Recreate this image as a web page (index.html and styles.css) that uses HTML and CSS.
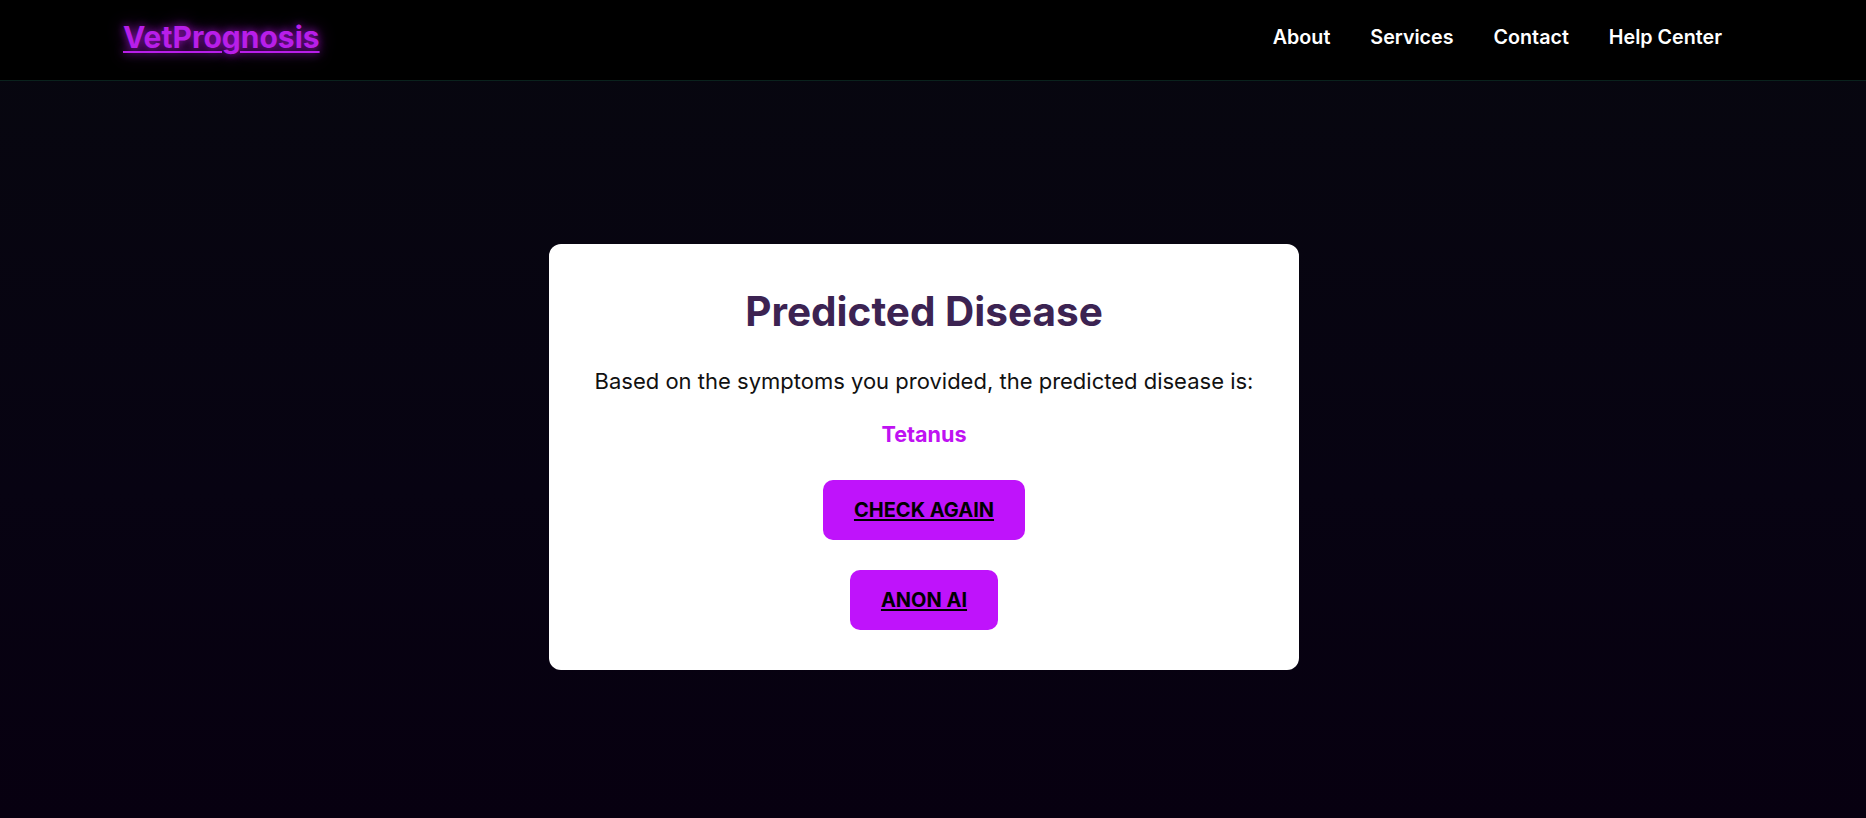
FILE: index.html
```html
<!DOCTYPE html>
<html lang="en">
<head>
<meta charset="utf-8">
<title>VetPrognosis - Predicted Disease</title>
<link rel="stylesheet" href="styles.css">
</head>
<body>
  <header class="navbar">
    <a class="logo" href="#">VetPrognosis</a>
    <nav class="nav-links">
      <a href="#">About</a>
      <a href="#">Services</a>
      <a href="#">Contact</a>
      <a href="#">Help Center</a>
    </nav>
  </header>
  <main class="main">
    <section class="card">
      <h1 class="card-title">Predicted Disease</h1>
      <p class="card-text">Based on the symptoms you provided, the predicted disease is:</p>
      <p class="disease">Tetanus</p>
      <div class="actions">
        <a class="btn" href="#">CHECK AGAIN</a>
        <a class="btn" href="#">ANON AI</a>
      </div>
    </section>
  </main>
</body>
</html>
```

FILE: styles.css
```css
* {
  box-sizing: border-box;
}

html, body {
  margin: 0;
  padding: 0;
  height: 100%;
}

body {
  font-family: Inter, "Noto Sans", "Liberation Sans", sans-serif;
  background: linear-gradient(to bottom, #07070f 0%, #070312 60%, #070010 100%);
  color: #111;
  overflow: hidden;
}

.navbar {
  height: 81px;
  background: #000;
  border-bottom: 1px solid #0a221d;
  display: flex;
  align-items: center;
  justify-content: space-between;
  padding: 0 124px 7px 123px;
}

.logo {
  font-size: 30px;
  font-weight: 700;
  color: #b81ee9;
  text-decoration: underline;
  text-decoration-thickness: 2px;
  text-underline-offset: 3px;
  text-shadow: 0 0 8px rgba(185, 30, 235, 0.75), 0 0 18px rgba(185, 30, 235, 0.45);
}

.nav-links {
  display: flex;
}

.nav-links a {
  color: #fff;
  text-decoration: none;
  font-size: 19.7px;
  font-weight: 600;
  padding: 0 20px;
}

.main {
  display: flex;
  justify-content: center;
  padding: 163px 18px 0 0;
}

.card {
  width: 750px;
  background: #fff;
  border-radius: 12px;
  padding: 44px 40px 40px;
  display: flex;
  flex-direction: column;
  align-items: center;
  text-align: center;
}

.card-title {
  margin: 0;
  font-size: 40.5px;
  font-weight: 700;
  color: #3c2352;
  line-height: 48px;
}

.card-text {
  margin: 32px 0 0;
  font-size: 22px;
  line-height: 27px;
  color: #111;
}

.disease {
  margin: 26px 0 0;
  font-size: 21.6px;
  line-height: 27px;
  font-weight: 700;
  color: #bf12f2;
}

.actions {
  margin-top: 32px;
  display: flex;
  flex-direction: column;
  align-items: center;
  gap: 30px;
}

.btn {
  display: block;
  background: #bf13fb;
  color: #000;
  font-size: 20px;
  font-weight: 700;
  line-height: 24px;
  padding: 18px 31px;
  border-radius: 10px;
  text-decoration: underline;
  text-decoration-thickness: 2px;
  text-underline-offset: 2px;
}
```
